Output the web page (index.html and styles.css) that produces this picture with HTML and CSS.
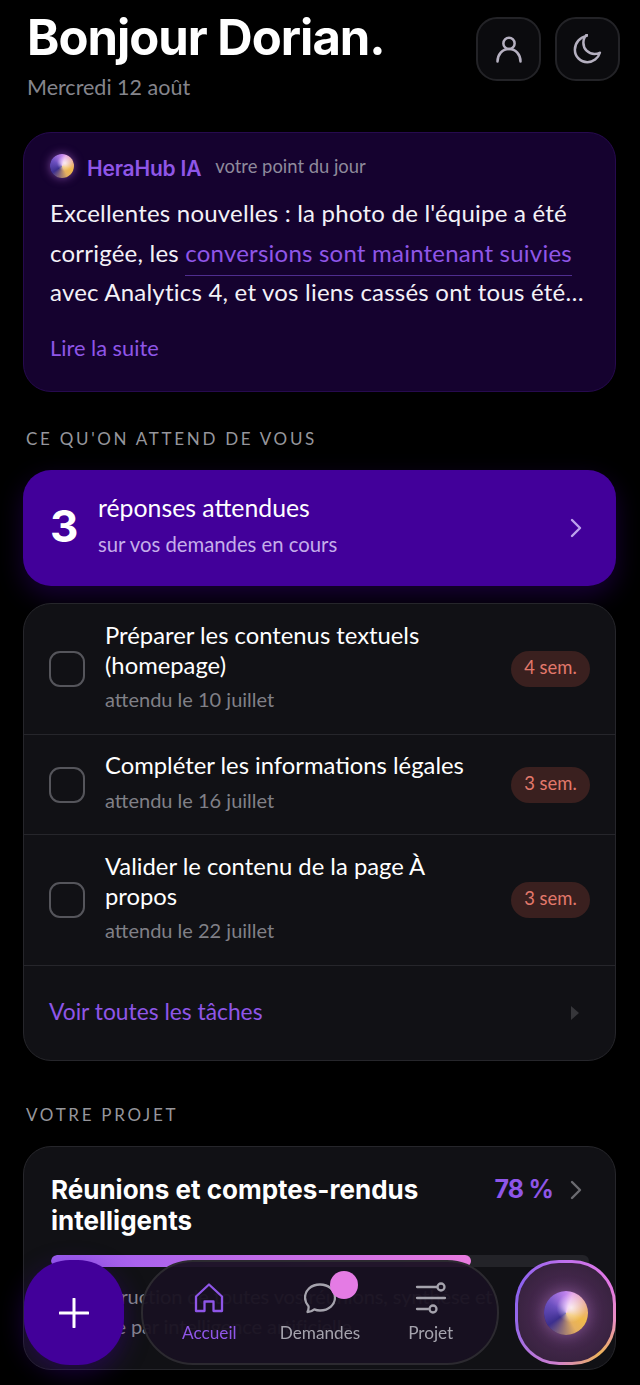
FILE: index.html
```html
<!DOCTYPE html>
<html lang="fr">
<head>
  <meta charset="UTF-8" />
  <meta name="viewport" content="width=device-width, initial-scale=1.0" />
  <title>HeraHub</title>
  <link rel="stylesheet" href="styles.css">
</head>
<body>
  <main>
    <header class="top">
      <div>
        <h1>Bonjour Dorian.</h1>
        <p class="date">Mercredi 12 août</p>
      </div>
      <div class="top-actions">
        <button class="icon-btn" aria-label="Profil">
          <svg viewBox="0 0 24 24" width="30" height="30"><circle cx="12" cy="7.5" r="4.5"/><path d="M2.8 22c0-5.600 3.800-10 9.200-10s9.200 4.400 9.200 10"/></svg>
        </button>
        <button class="icon-btn" aria-label="Mode sombre">
          <svg viewBox="0 0 24 24" width="30" height="30"><path d="M11 1.500C5.700 2.500 1.500 7 1.500 12.500c0 5.600 4.500 10 10 10 4.600 0 8.700-3 10-7.500-1.200.7-2.700 1-4.200 1-5.200 0-9-4-9-9 0-2.500.9-4.800 2.700-6.500z"/></svg>
        </button>
      </div>
    </header>

    <section class="brief">
      <div class="brief-head">
        <span class="orb orb-small"></span>
        <strong>HeraHub IA</strong>
        <span class="brief-note">votre point du jour</span>
      </div>
      <p class="brief-text">Excellentes nouvelles : la photo de l'équipe a été corrigée, les <a href="#">conversions sont maintenant suivies</a> avec Analytics 4, et vos liens cassés ont tous été…</p>
      <a class="more" href="#">Lire la suite</a>
    </section>

    <h2 class="label">CE QU'ON ATTEND DE VOUS</h2>

    <a class="cta" href="#">
      <span class="cta-num">3</span>
      <span class="cta-text">
        <span class="cta-title">réponses attendues</span>
        <span class="cta-sub">sur vos demandes en cours</span>
      </span>
      <svg class="chev chev-light" viewBox="0 0 12 20" width="12" height="20"><path d="M2 2l8 8-8 8"/></svg>
    </a>

    <section class="card tasks">
      <div class="task task-tall">
        <span class="check"></span>
        <div class="task-body">
          <div class="task-title">Préparer les contenus textuels (homepage)</div>
          <div class="task-date">attendu le 10 juillet</div>
        </div>
        <span class="pill">4 sem.</span>
      </div>
      <div class="task">
        <span class="check"></span>
        <div class="task-body">
          <div class="task-title">Compléter les informations légales</div>
          <div class="task-date">attendu le 16 juillet</div>
        </div>
        <span class="pill">3 sem.</span>
      </div>
      <div class="task task-tall">
        <span class="check"></span>
        <div class="task-body">
          <div class="task-title">Valider le contenu de la page À propos</div>
          <div class="task-date">attendu le 22 juillet</div>
        </div>
        <span class="pill">3 sem.</span>
      </div>
      <a class="all-tasks" href="#">
        <span>Voir toutes les tâches</span>
        <i class="tri"></i>
      </a>
    </section>

    <h2 class="label label-project">VOTRE PROJET</h2>

    <section class="card project">
      <div class="project-head">
        <h3>Réunions et comptes-rendus intelligents</h3>
        <span class="percent">78 %</span>
        <svg class="chev chev-grey" viewBox="0 0 12 20" width="12" height="20"><path d="M2 2l8 8-8 8"/></svg>
      </div>
      <div class="bar"><div class="bar-fill" style="width: 78%"></div></div>
      <p class="project-text">Reconstruction de toutes vos réunions, synthèse et<br>analysée par intelligence artificielle.</p>
    </section>
  </main>

  <div class="dock">
    <button class="fab" aria-label="Nouvelle demande">
      <svg viewBox="0 0 30 30" width="30" height="30"><path d="M15 1v28M1 15h28"/></svg>
    </button>
    <nav class="tabs">
      <a class="tab active" href="#">
        <svg viewBox="0 0 32 32" width="32" height="32"><path d="M3 14.500L16 2.500l13 12V29h-8.500v-9.500h-9V29H3z"/></svg>
        <span>Accueil</span>
      </a>
      <a class="tab" href="#">
        <svg viewBox="0 0 32 32" width="32" height="32"><path d="M3.500 30c1-2.200 1.300-4 1-5.700C2.200 21.500 1 18.500 1 15.500 1 8.500 7 2.500 16 2.500S31 8.500 31 15.500 25 28.500 16 28.500c-2.200 0-4-.4-5.700-1.100C8.500 29 6 30 3.500 30z"/></svg>
        <span>Demandes</span>
        <i class="dot"></i>
      </a>
      <a class="tab" href="#">
        <svg viewBox="0 0 32 32" width="32" height="32"><path d="M2 5h20M2 16h28M2 27h11"/><circle cx="26" cy="5" r="3.500"/><circle cx="18" cy="27" r="3.500"/></svg>
        <span>Projet</span>
      </a>
    </nav>
    <button class="orb-btn" aria-label="Assistant">
      <span class="orb orb-big"></span>
    </button>
  </div>
</body>
</html>
```
FILE: styles.css
```css
* {
  margin: 0;
  padding: 0;
  box-sizing: border-box;
}

html, body {
  height: 1385px;
  overflow: hidden;
}

body {
  font-family: 'Lato', 'Noto Sans', sans-serif;
  background: #000;
  color: #fff;
  position: relative;
}

a {
  text-decoration: none;
  color: inherit;
}

button {
  border: 0;
  background: none;
  color: inherit;
}

main {
  padding: 10px 24px 0 23px;
}

/* header */
.top {
  display: flex;
  justify-content: space-between;
  align-items: flex-start;
  height: 122px;
}

h1 {
  font-family: 'Inter', sans-serif;
  font-size: 49px;
  font-weight: 700;
  line-height: 56px;
  letter-spacing: -1px;
  margin-left: 4px;
}

.date {
  font-size: 21.500px;
  line-height: 28px;
  margin: 7px 0 0 4px;
  color: #85858c;
}

.top-actions {
  display: flex;
  gap: 14px;
  margin-top: 7px;
  margin-right: -4px;
}

.icon-btn {
  width: 65px;
  height: 64px;
  border-radius: 21px;
  background: #0b0b0e;
  border: 2px solid #232327;
  display: flex;
  align-items: center;
  justify-content: center;
}

.icon-btn svg {
  fill: none;
  stroke: #b5b0c0;
  stroke-width: 2;
  stroke-linecap: round;
  stroke-linejoin: round;
}

/* ai summary */
.brief {
  height: 260px;
  background: #15022f;
  border: 1px solid #260a4e;
  border-radius: 28px;
  padding: 18px 26px 0;
}

.brief-head {
  display: flex;
  align-items: center;
  height: 30px;
}

.brief-head strong {
  font-family: 'Inter', sans-serif;
  font-size: 21px;
  font-weight: 600;
  letter-spacing: -.2px;
  color: #8f56e8;
  margin-left: 13px;
  position: relative;
  top: 2px;
}

.brief-note {
  font-size: 18.400px;
  color: #8f8a9c;
  margin-left: 14px;
}

.brief-text {
  font-size: 24px;
  letter-spacing: .22px;
  line-height: 39.500px;
  margin-top: 12px;
  color: #f3f1f7;
}

.brief-text a {
  color: #8f56e8;
  border-bottom: 1px solid #4f2d8f;
  padding-bottom: 8px;
}

.more {
  display: block;
  font-size: 21.800px;
  margin-top: 22px;
  color: #8f56e8;
}

.orb {
  display: block;
  border-radius: 50%;
  background:
    radial-gradient(circle at 62% 38%, rgba(255, 255, 255, .75), rgba(255, 255, 255, 0) 38%),
    conic-gradient(from 20deg, #e6a8e8 0deg, #f0b94a 90deg, #e5b060 130deg, #3c2f8e 215deg, #6c50c0 280deg, #c184ee 340deg, #e6a8e8 360deg);
}

.orb-small {
  width: 24px;
  height: 24px;
  box-shadow: 0 0 10px rgba(200, 120, 240, .55);
}

.orb-big {
  width: 44px;
  height: 44px;
  box-shadow: 0 0 16px rgba(220, 150, 240, .4);
}

/* section labels */
.label {
  font-size: 17px;
  font-weight: 400;
  letter-spacing: 2.700px;
  color: #96969c;
  margin: 37px 0 21px 3px;
  line-height: 20px;
}

.label-project {
  margin-top: 44px;
  margin-bottom: 21px;
}

/* call to action */
.cta {
  height: 116px;
  background: #42009a;
  border-radius: 28px;
  display: flex;
  align-items: center;
  padding: 0 34px 0 27px;
  box-shadow: 0 10px 26px rgba(66, 0, 154, .35);
}

.cta-num {
  font-family: 'Inter', sans-serif;
  font-size: 44px;
  font-weight: 700;
  width: 48px;
  padding-bottom: 4px;
}

.cta-text {
  flex: 1;
  display: flex;
  flex-direction: column;
  padding-bottom: 7px;
}

.cta-title {
  font-size: 24.800px;
  line-height: 30px;
}

.cta-sub {
  font-size: 20.300px;
  line-height: 24px;
  margin-top: 9px;
  color: #c5aeea;
}

.chev {
  fill: none;
  stroke-width: 2.4;
  stroke-linecap: round;
  stroke-linejoin: round;
}

.chev-light {
  stroke: #bda2ec;
}

.chev-grey {
  stroke: #6b6b70;
}

/* cards */
.card {
  background: #111115;
  border: 1px solid #26262b;
  border-radius: 28px;
}

.tasks {
  margin-top: 17px;
  height: 458px;
}

.task {
  display: flex;
  align-items: center;
  height: 100px;
  padding: 0 25px;
  border-bottom: 1px solid #26262b;
}

.task-tall {
  height: 131px;
}

.check {
  flex: none;
  width: 36px;
  height: 36px;
  border: 2px solid #55555b;
  border-radius: 11px;
}

.task-body {
  flex: 1;
  margin: 0 30px 6px 20px;
}

.task-title {
  font-size: 23.800px;
  line-height: 29.500px;
}

.task-date {
  font-size: 20px;
  line-height: 24px;
  margin-top: 7px;
  color: #808087;
}

.pill {
  flex: none;
  width: 79px;
  height: 36px;
  border-radius: 18px;
  background: #3a201f;
  color: #e2786b;
  font-size: 18.400px;
  line-height: 32px;
  text-align: center;
}

.all-tasks {
  display: flex;
  justify-content: space-between;
  align-items: center;
  height: 94px;
  padding: 0 36px 0 25px;
  font-size: 22.800px;
  color: #8f56e8;
}

.all-tasks span {
  position: relative;
  top: -2px;
}

.tri {
  width: 0;
  height: 0;
  border-left: 8px solid #36363a;
  border-top: 7px solid transparent;
  border-bottom: 7px solid transparent;
}

/* project */
.project {
  height: 224px;
  padding: 27px 26px 0 27px;
}

.project-head {
  display: flex;
  align-items: flex-start;
}

.project-head h3 {
  flex: 1;
  font-family: 'Inter', sans-serif;
  font-size: 26px;
  font-weight: 700;
  line-height: 31px;
  padding-right: 60px;
}

.percent {
  font-family: 'Inter', sans-serif;
  font-size: 25px;
  font-weight: 700;
  line-height: 31px;
  letter-spacing: -.8px;
  color: #8f56e8;
  margin-right: 17px;
}

.project-head .chev {
  margin-top: 6px;
  margin-right: 7px;
}

.bar {
  height: 12px;
  margin-top: 19px;
  background: #232328;
  border-radius: 6px;
  overflow: hidden;
}

.bar-fill {
  height: 100%;
  border-radius: 6px;
  background: linear-gradient(90deg, #9a5cf0, #e87bdf);
}

.project-text {
  font-size: 20px;
  letter-spacing: -.1px;
  line-height: 30px;
  margin-top: 14px;
  color: #8a8a90;
}

/* floating bottom nav */
.dock {
  position: fixed;
  left: 24px;
  right: 24px;
  top: 1260px;
  height: 105px;
  display: flex;
  justify-content: space-between;
}

.fab {
  width: 100px;
  height: 105px;
  border-radius: 46px;
  background: #42009a;
  display: flex;
  align-items: center;
  justify-content: center;
  box-shadow: 0 8px 26px rgba(66, 0, 154, .4);
}

.fab svg {
  fill: none;
  stroke: #fff;
  stroke-width: 3;
  stroke-linecap: round;
}

.tabs {
  position: absolute;
  left: 117px;
  width: 358px;
  height: 105px;
  display: flex;
  justify-content: center;
  padding: 0 11px;
  border-radius: 52px;
  border: 2px solid #2c2a30;
  background: rgba(24, 17, 33, .95);
}

.tab {
  position: relative;
  flex: 1;
  display: flex;
  flex-direction: column;
  align-items: center;
  padding-top: 20px;
  font-size: 17.200px;
  color: #a5a3ad;
}

.tab svg {
  fill: none;
  stroke: currentColor;
  stroke-width: 2.300;
  stroke-linecap: round;
  stroke-linejoin: round;
  margin-bottom: 8px;
}

.tab.active {
  color: #8f56e8;
}

.dot {
  position: absolute;
  left: 65px;
  top: 9px;
  width: 28px;
  height: 28px;
  border-radius: 50%;
  background: #e47be4;
}

.orb-btn {
  width: 101px;
  height: 105px;
  border-radius: 44px;
  border: 3px solid transparent;
  background:
    radial-gradient(circle at 50% 50%, #55305f, #38223f 75%) padding-box,
    conic-gradient(#c070ee 0deg, #e579e4 60deg, #e98fc0 100deg, #eeb35a 140deg, #d080d0 190deg, #9a6ae8 250deg, #8b62ee 300deg, #c070ee 360deg) border-box;
  display: flex;
  align-items: center;
  justify-content: center;
}
```
